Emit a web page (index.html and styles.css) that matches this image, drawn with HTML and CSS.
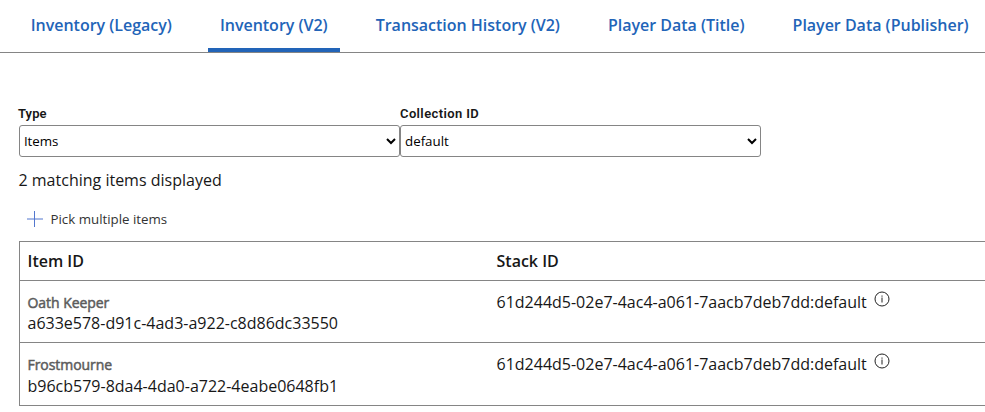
FILE: index.html
```html
<!DOCTYPE html>
<html lang="en">
<head>
<meta charset="utf-8">
<title>Inventory (V2)</title>
<link rel="stylesheet" href="styles.css">
</head>
<body>
<nav class="tabs">
  <a class="tab">Inventory (Legacy)</a>
  <a class="tab active">Inventory (V2)</a>
  <a class="tab">Transaction History (V2)</a>
  <a class="tab">Player Data (Title)</a>
  <a class="tab">Player Data (Publisher)</a>
</nav>
<main>
  <div class="filters">
    <label class="field type"><span>Type</span><select><option>Items</option></select></label>
    <label class="field coll"><span class="wide">Collection ID</span><select><option>default</option></select></label>
  </div>
  <p class="count">2 matching items displayed</p>
  <div class="pick">
    <svg width="16" height="16" viewBox="0 0 16 16"><path d="M7.5 0v16M0 8h16"/></svg>
    <span>Pick multiple items</span>
  </div>
  <div class="table">
    <div class="row head"><div class="c1"><b>Item ID</b></div><div class="c2"><b>Stack ID</b></div></div>
    <div class="row">
      <div class="c1"><span class="name">Oath Keeper</span><span class="id">a633e578-d91c-4ad3-a922-c8d86dc33550</span></div>
      <div class="c2"><span class="stack">61d244d5-02e7-4ac4-a061-7aacb7deb7dd:default</span><svg class="info" width="16" height="16" viewBox="0 0 16 16"><circle cx="8" cy="8" r="7"/><path d="M8 6.5v5M8 4.5v1.2"/></svg></div>
    </div>
    <div class="row last">
      <div class="c1"><span class="name">Frostmourne</span><span class="id">b96cb579-8da4-4da0-a722-4eabe0648fb1</span></div>
      <div class="c2"><span class="stack">61d244d5-02e7-4ac4-a061-7aacb7deb7dd:default</span><svg class="info" width="16" height="16" viewBox="0 0 16 16"><circle cx="8" cy="8" r="7"/><path d="M8 6.5v5M8 4.5v1.2"/></svg></div>
    </div>
  </div>
</main>
</body>
</html>
```
FILE: styles.css
```css
* { box-sizing: border-box; }
body { margin: 0; background: #fff; color: #171717; font: 16px/20px "Open Sans", sans-serif; overflow: hidden; }
.tabs { display: flex; gap: 24px; height: 53px; padding-left: 18.7px; border-bottom: 1px solid #858585; }
.tab { flex: none; height: 52px; padding: 15px 12px 0; color: #2264b8; font-weight: 600; letter-spacing: -0.012px; white-space: nowrap; }
.active { border-bottom: 4px solid #2264b8; }
main { padding: 50px 0 0 19px; }
.filters { display: flex; }
.field { display: flex; flex-direction: column; font: 600 13px/22px Roboto, sans-serif; }
.field span { margin-left: -1px; letter-spacing: 0.1px; }
.field .wide { margin-left: 0; letter-spacing: 0.38px; }
.type { width: 381px; }
.coll { width: 361px; }
select { height: 32px; border: 1px solid #858585; border-radius: 3px; background: #fff; color: #000; font: 13.333px "Open Sans", sans-serif; padding: 0; }
.type select { letter-spacing: -0.1px; }
.count { margin: 13px 0 0 -0.5px; }
.pick { display: flex; align-items: center; height: 20px; margin: 19px 0 12px 7.5px; gap: 8px; font-size: 13.3px; color: #333; }
.pick svg { stroke: #5377ce; stroke-width: 1; fill: none; }
.table { border: 1px solid #858585; border-right: 0; }
.row { display: flex; height: 62px; }
.row + .row { border-top: 1px solid #858585; }
.row.last { height: 63px; }
.row.head { height: 38px; align-items: center; }
.head b { font-weight: 600; }
.c1 { width: 469px; padding: 12px 7.5px 0; }
.c2 { padding: 11px 7.5px 0; display: flex; }
.head > div { padding-top: 0; }
.name, .id { display: block; }
.name { color: #5c5c5c; font-size: 14px; letter-spacing: -0.05px; -webkit-text-stroke: 0.5px #5c5c5c; }
.last .id { padding-top: 1px; }
.info { margin: -1px 0 0 7.5px; stroke: #222; fill: none; }
```
